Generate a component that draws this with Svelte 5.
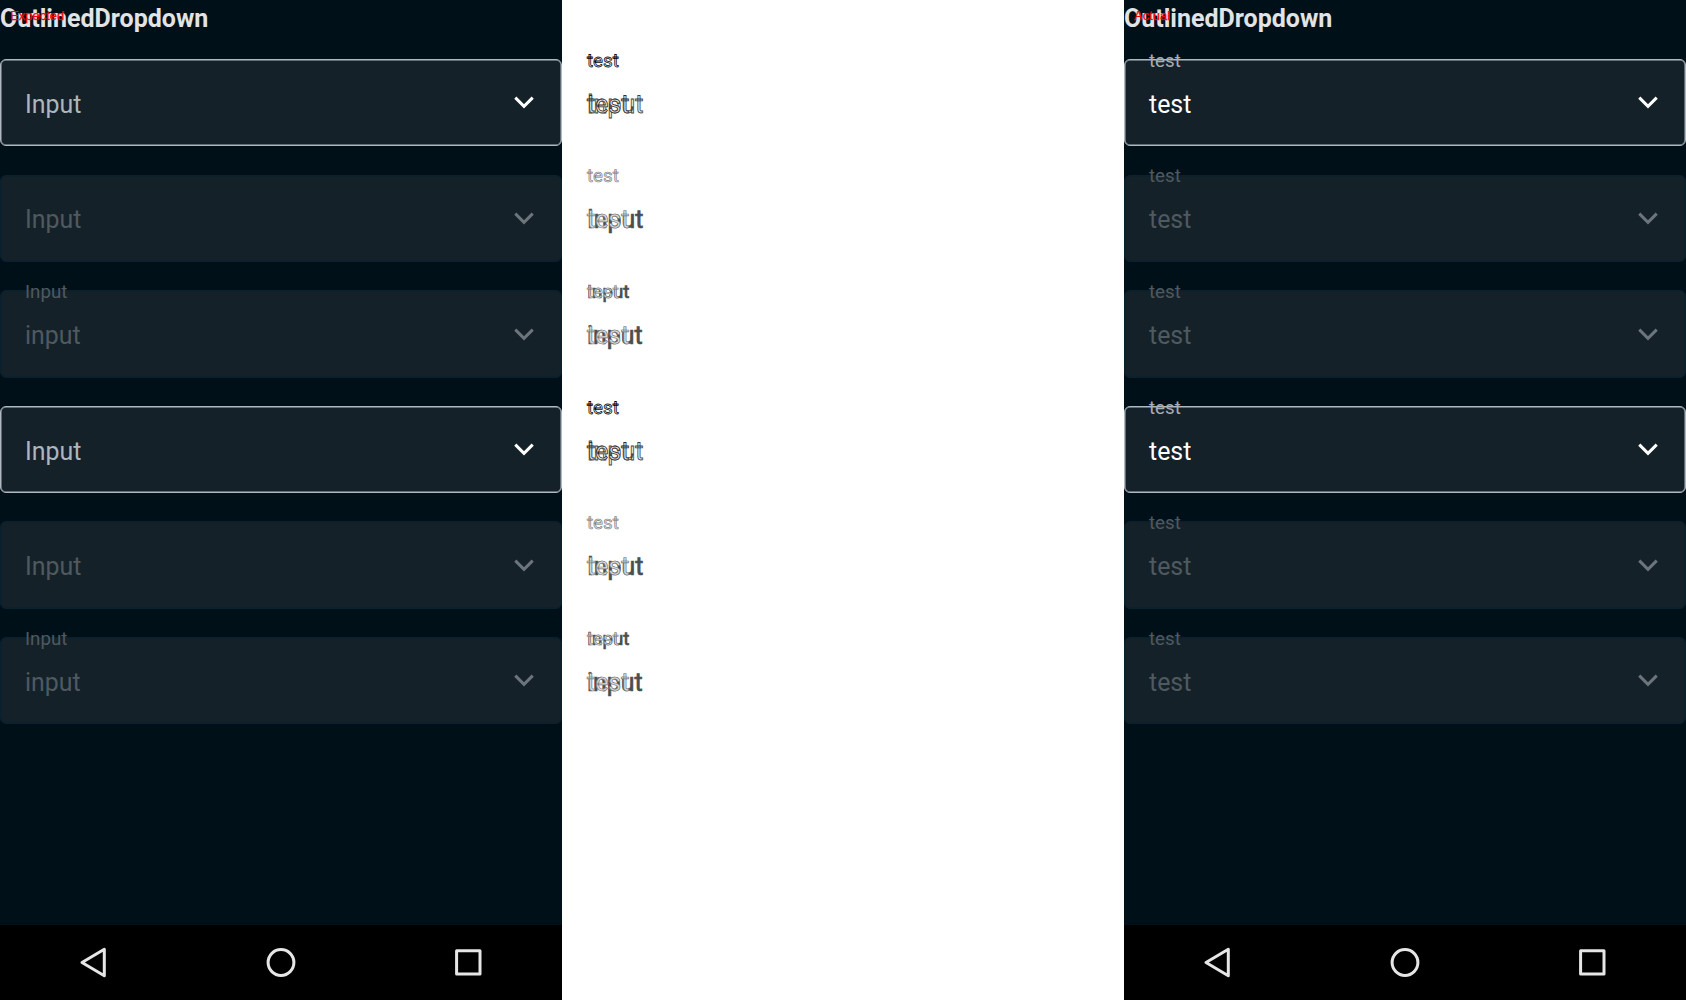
<script>
  const kinds = ['enabled', 'disabled', 'disabled'];
  const rows = [0, 1, 2, 3, 4, 5];

  const expected = rows.map((i) => ({
    kind: kinds[i % 3],
    label: i % 3 === 2 ? 'Input' : '',
    value: i % 3 === 2 ? 'input' : 'Input',
    placeholder: i % 3 !== 2
  }));
  const actual = rows.map((i) => ({
    kind: kinds[i % 3],
    label: 'test',
    value: 'test',
    placeholder: false
  }));
  const screens = [
    { tag: 'Expected', fields: expected },
    { tag: 'Actual', fields: actual }
  ];
</script>

{#snippet screen(data)}
  <section class="screen">
    <span class="tag">{data.tag}</span>
    <h1>OutlinedDropdown</h1>
    <div class="fields">
      {#each data.fields as field}
        <div class="field {field.kind}">
          {#if field.label}<span class="label">{field.label}</span>{/if}
          <span class="value" class:placeholder={field.placeholder}>{field.value}</span>
          <svg class="chevron" width="20" height="13" viewBox="0 0 20 13">
            <path d="M1.3 1.6 L10 10.3 L18.7 1.6" />
          </svg>
        </div>
      {/each}
    </div>
    <nav>
      <div><svg width="34" height="34" viewBox="0 0 34 34"><path d="M27.3 4.3 V30.7 L5 17.5 Z" /></svg></div>
      <div><svg width="34" height="34" viewBox="0 0 34 34"><circle cx="17" cy="17.5" r="12.9" /></svg></div>
      <div><svg width="34" height="34" viewBox="0 0 34 34"><rect x="5.6" y="5.7" width="23.4" height="23.4" /></svg></div>
    </nav>
  </section>
{/snippet}

<main>
  {@render screen(screens[0])}
  <section class="diff">
    <div class="fields">
      {#each expected as field, i}
        <div class="field changed {field.kind}">
          <span class="label">
            {#if field.label}<span class="before">{field.label}</span>{/if}
            <span class="after">{actual[i].label}</span>
          </span>
          <span class="value">
            <span class="before">{field.value}</span>
            <span class="after">{actual[i].value}</span>
          </span>
        </div>
      {/each}
    </div>
  </section>
  {@render screen(screens[1])}
</main>

<style>
  :global(body) { margin: 0; background: #fff; overflow: hidden; }
  main {
    display: grid;
    grid-template-columns: repeat(3, 562px);
    width: 1686px;
    height: 1000px;
    font-family: Roboto, sans-serif;
  }
  .screen {
    position: relative;
    display: flex;
    flex-direction: column;
    background: #001018;
  }
  .tag {
    position: absolute;
    left: 10px;
    top: 8px;
    font: 13px/16px "Liberation Sans", sans-serif;
    color: #f00;
    -webkit-text-stroke: 0.25px #f00;
  }
  h1 {
    box-sizing: border-box;
    margin: 0;
    height: 59px;
    padding-top: 1px;
    font-size: 25px;
    line-height: 36px;
    font-weight: 700;
    color: #e1e3e4;
  }
  .diff { padding-top: 59px; }
  .fields {
    display: flex;
    flex-direction: column;
    gap: 28.2px;
    flex: 1;
  }
  .field {
    position: relative;
    box-sizing: border-box;
    height: 87.4px;
    display: flex;
    align-items: center;
    justify-content: space-between;
    padding: 4.4px 27px 0 24px;
    border: 1px solid #b0b9c2;
    box-shadow: inset 0 0 0 0.5px #b0b9c2;
    border-radius: 6px;
    background: #152128;
    color: #fff;
  }
  .field.disabled { border-color: #08222f; box-shadow: inset 0 0 0 0.5px #08222f; color: #4e5960; }
  .value { font-size: 24.9px; line-height: 30px; }
  .label {
    position: absolute;
    left: 24px;
    top: -10.2px;
    font-size: 18.7px;
    line-height: 22px;
    color: #a5adb5;
  }
  .enabled .placeholder { color: #aeb5bf; }
  .disabled .label { color: #4e5960; }
  .chevron { fill: none; stroke: #fff; stroke-width: 3; margin-bottom: 4px; }
  .disabled .chevron { stroke: #6b757b; }
  nav {
    box-sizing: border-box;
    display: grid;
    grid-template-columns: repeat(3, 1fr);
    height: 75px;
    padding-bottom: 2px;
    background: #000;
  }
  nav div { display: flex; align-items: center; justify-content: center; }
  nav svg { fill: none; stroke: #e6e6e6; stroke-width: 3; stroke-linejoin: round; }

  .field.changed { background: none; border-color: transparent; box-shadow: none; }
  .changed .label, .changed .value { display: grid; }
  .before, .after { grid-area: 1 / 1; }
  .disabled .before { color: #4b4e50; -webkit-text-stroke: 0.7px #4b4e50; }
  .disabled .after { color: #e2e2e2; -webkit-text-stroke: 0.7px #777; }
  .disabled .label .after { color: #e2e2e2; -webkit-text-stroke: 0.6px #777; }
  .enabled .before { color: #f2eeea; -webkit-text-stroke: 0.8px #3c4140; }
  .enabled .after { color: #ebe3dd; -webkit-text-stroke: 0.8px #302a2a; }
  .enabled .label .after { color: #fff; -webkit-text-stroke: 0.8px #050809; }
</style>
